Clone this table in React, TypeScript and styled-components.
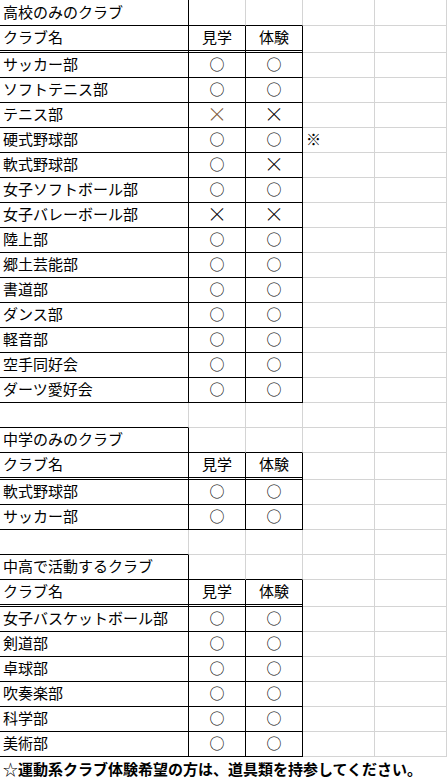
import styled, { createGlobalStyle } from 'styled-components';

const GlobalStyle = createGlobalStyle`
  html, body {
    margin: 0;
    padding: 0;
    background: #fff;
  }
  body {
    font-family: "Noto Sans CJK JP", "Noto Sans", sans-serif;
    color: #000;
  }
`;

type Line = 'black' | 'grid' | 'double' | 'none';

const COLS = '189px 57px 57px 72px 72px';
const GRID = '#d4d4d4';

const border = (l: Line) => {
  if (l === 'black') return '1px solid #000';
  if (l === 'double') return '3px double #000';
  if (l === 'grid') return `1px solid ${GRID}`;
  return 'none';
};

const Sheet = styled.div`
  width: 447px;
  height: 782px;
  overflow: hidden;
`;

const Row = styled.div<{ $h: number }>`
  display: grid;
  grid-template-columns: ${COLS};
  height: ${p => p.$h}px;
`;

const Cell = styled.div<{ $r: Line; $b: Line; $center?: boolean }>`
  box-sizing: border-box;
  height: 100%;
  border-right: ${p => border(p.$r)};
  border-bottom: ${p => border(p.$b)};
  display: flex;
  align-items: center;
  justify-content: ${p => (p.$center ? 'center' : 'flex-start')};
  padding: 0 0 3px ${p => (p.$center ? 0 : 3)}px;
  font-size: 15px;
  line-height: 1;
  white-space: nowrap;
`;

// ○ / × marks in the 見学・体験 columns
const Mark = styled.span<{ $cross?: boolean; $soft?: boolean }>`
  font-size: ${p => (p.$cross ? 20 : 15)}px;
  line-height: 1;
  font-weight: ${p => (p.$cross ? 300 : 400)};
  color: ${p => (p.$soft ? '#7a5632' : '#000')};
`;

const NoteRow = styled.div`
  box-sizing: border-box;
  height: 26px;
  border-bottom: 1px solid ${GRID};
  display: flex;
  align-items: center;
  padding: 0 0 3px 3px;
  font-size: 15px;
  line-height: 1;
  font-weight: 700;
  white-space: nowrap;
`;

const Star = styled.span`
  font-weight: 400;
`;

type Club = { name: string; visit: string; trial: string; note?: string; soft?: boolean };

const highOnly: Club[] = [
  { name: 'サッカー部', visit: '○', trial: '○' },
  { name: 'ソフトテニス部', visit: '○', trial: '○' },
  { name: 'テニス部', visit: '×', trial: '×', soft: true },
  { name: '硬式野球部', visit: '○', trial: '○', note: '※' },
  { name: '軟式野球部', visit: '○', trial: '×' },
  { name: '女子ソフトボール部', visit: '○', trial: '○' },
  { name: '女子バレーボール部', visit: '×', trial: '×' },
  { name: '陸上部', visit: '○', trial: '○' },
  { name: '郷土芸能部', visit: '○', trial: '○' },
  { name: '書道部', visit: '○', trial: '○' },
  { name: 'ダンス部', visit: '○', trial: '○' },
  { name: '軽音部', visit: '○', trial: '○' },
  { name: '空手同好会', visit: '○', trial: '○' },
  { name: 'ダーツ愛好会', visit: '○', trial: '○' },
];

const juniorOnly: Club[] = [
  { name: '軟式野球部', visit: '○', trial: '○' },
  { name: 'サッカー部', visit: '○', trial: '○' },
];

const both: Club[] = [
  { name: '女子バスケットボール部', visit: '○', trial: '○' },
  { name: '剣道部', visit: '○', trial: '○' },
  { name: '卓球部', visit: '○', trial: '○' },
  { name: '吹奏楽部', visit: '○', trial: '○' },
  { name: '科学部', visit: '○', trial: '○' },
  { name: '美術部', visit: '○', trial: '○' },
];

const TitleRow = ({ title, first }: { title: string; first?: boolean }) => (
  <Row $h={first ? 26 : 25}>
    <Cell $r="black" $b="black">{title}</Cell>
    <Cell $r="grid" $b="black" />
    <Cell $r="grid" $b="black" />
    <Cell $r="grid" $b="grid" />
    <Cell $r="grid" $b="grid" />
  </Row>
);

const HeaderRow = () => (
  <Row $h={27}>
    <Cell $r="black" $b="double">クラブ名</Cell>
    <Cell $r="black" $b="double" $center>見学</Cell>
    <Cell $r="black" $b="double" $center>体験</Cell>
    <Cell $r="grid" $b="grid" />
    <Cell $r="grid" $b="grid" />
  </Row>
);

const ClubRow = ({ club }: { club: Club }) => (
  <Row $h={25}>
    <Cell $r="black" $b="black">{club.name}</Cell>
    <Cell $r="black" $b="black" $center>
      <Mark $cross={club.visit === '×'} $soft={club.soft}>{club.visit}</Mark>
    </Cell>
    <Cell $r="black" $b="black" $center>
      <Mark $cross={club.trial === '×'}>{club.trial}</Mark>
    </Cell>
    <Cell $r="grid" $b="grid">{club.note}</Cell>
    <Cell $r="grid" $b="grid" />
  </Row>
);

const BlankRow = ({ beforeTitle }: { beforeTitle?: boolean }) => (
  <Row $h={25}>
    <Cell $r="grid" $b={beforeTitle ? 'black' : 'grid'} />
    <Cell $r="grid" $b="grid" />
    <Cell $r="grid" $b="grid" />
    <Cell $r="grid" $b="grid" />
    <Cell $r="grid" $b="grid" />
  </Row>
);

const Section = ({ title, clubs, first }: { title: string; clubs: Club[]; first?: boolean }) => (
  <>
    <TitleRow title={title} first={first} />
    <HeaderRow />
    {clubs.map((c, i) => (
      <ClubRow key={i} club={c} />
    ))}
  </>
);

export default function App() {
  return (
    <>
      <GlobalStyle />
      <Sheet>
        <Section title="高校のみのクラブ" clubs={highOnly} first />
        <BlankRow beforeTitle />
        <Section title="中学のみのクラブ" clubs={juniorOnly} />
        <BlankRow beforeTitle />
        <Section title="中高で活動するクラブ" clubs={both} />
        <NoteRow>
          <Star>☆</Star>運動系クラブ体験希望の方は、道具類を持参してください。
        </NoteRow>
      </Sheet>
    </>
  );
}
